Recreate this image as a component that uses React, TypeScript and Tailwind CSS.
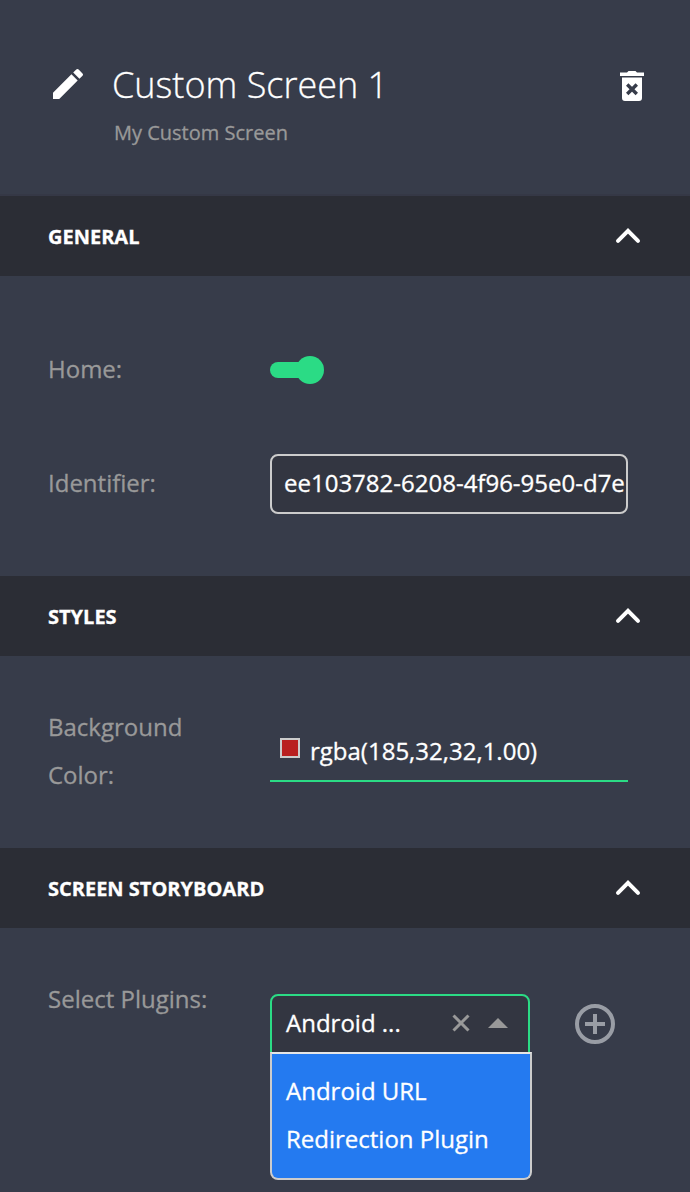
import React from 'react';

function Chevron() {
  return (
    <svg className="h-12 w-12" viewBox="0 0 24 24" fill="none" stroke="#fff" strokeWidth="2" strokeLinecap="round">
      <path d="M7 14.4 12 9.4l5 5" />
    </svg>
  );
}

function SectionHeader({ title }: { title: string }) {
  return (
    <div className="flex h-20 shrink-0 items-center justify-between bg-[#2b2d35] pl-12 pr-[38px]">
      <h2 className="pt-0.5 text-[20px] font-bold leading-[30px] text-white">{title}</h2>
      <Chevron />
    </div>
  );
}

export default function App() {
  return (
    <div
      className="flex h-[1192px] w-[690px] flex-col overflow-hidden bg-[#373c4a] text-[24px] leading-[48px] text-[#999] [-webkit-text-stroke:0.3px]"
      style={{ fontFamily: '"Open Sans", sans-serif' }}
    >
      <header className="flex h-[196px] shrink-0 items-start border-b-2 border-[#353846] pl-12 pr-[38px] pt-[60px]">
        <svg className="mt-1 h-10 w-10 shrink-0" viewBox="0 0 24 24" fill="#fff">
          <path d="M3 17.25V21h3.75L17.81 9.94l-3.75-3.75L3 17.25zM20.71 7.04a.996.996 0 0 0 0-1.41l-2.34-2.34a.996.996 0 0 0-1.41 0l-1.83 1.83 3.75 3.75 1.83-1.83z" />
        </svg>
        <div className="ml-6 flex-1">
          <h1 className="text-[36px] font-light leading-[50px] text-white">Custom Screen 1</h1>
          <p className="ml-0.5 mt-2 text-[20px] leading-[30px]">My Custom Screen</p>
        </div>
        <svg className="mt-1.5 h-10 w-10 shrink-0" viewBox="0 0 40 40">
          <path d="M8 6.500h7L16.500 5h7L25 6.500h7V10H8zM10 11.500h20V32q0 3-3 3H13q-3 0-3-3z" fill="#fff" />
          <path d="m15.200 18.500 9.600 9.500m0-9.500-9.600 9.500" stroke="#373c4a" strokeWidth="3.400" />
        </svg>
      </header>

      <SectionHeader title="GENERAL" />
      <section className="flex h-[300px] shrink-0 flex-col px-12">
        <div className="mt-[69px] flex h-12 items-center">
          <span className="w-[222px]">Home:</span>
          <div className="mt-0.5 flex h-7 w-[54px] items-center">
            <div className="h-4 w-10 rounded-l-full bg-[#2bdb85]" />
            <div className="-ml-[14px] h-7 w-7 shrink-0 rounded-full bg-[#2bdb85]" />
          </div>
        </div>
        <div className="mt-[61px] flex h-[60px] items-center">
          <span className="w-[222px] pb-0.5">Identifier:</span>
          <div className="h-[60px] w-[358px] overflow-hidden whitespace-nowrap rounded-lg border-2 border-[#ccc] bg-[#333641] pl-3 leading-[54px] text-white">
            ee103782-6208-4f96-95e0-d7e
          </div>
        </div>
      </section>

      <SectionHeader title="STYLES" />
      <section className="flex h-[192px] shrink-0 items-start px-12 pt-[47px]">
        <div className="w-[222px] pr-16">Background Color:</div>
        <div className="mt-[19px] flex h-[60px] w-[358px] border-b-2 border-[#2bdb85] pl-[10px]">
          <div className="mt-4 h-5 w-5 border-2 border-[#ccc] bg-[#b92020]" />
          <span className="ml-[10px] mt-[5px] text-white">rgba(185,32,32,1.00)</span>
        </div>
      </section>

      <SectionHeader title="SCREEN STORYBOARD" />
      <section className="flex flex-1 items-start px-12">
        <div className="mt-[47px] w-[222px]">Select Plugins:</div>
        <div className="relative mt-[66px] flex h-[60px] w-[260px] items-center rounded-t-lg border-2 border-[#2bdb85] bg-[#333641] pb-0.5 pl-[14px] text-white">
          <span className="w-[165px] leading-[54px]">Android ...</span>
          <svg className="h-5 w-5" viewBox="0 0 20 20" fill="none" stroke="#999" strokeWidth="3">
            <path d="m2.500 2.500 15 15M17.500 2.500l-15 15" />
          </svg>
          <svg className="ml-[17px] h-[10px] w-5" viewBox="0 0 20 10">
            <path d="M0 10 10 0l10 10z" fill="#999" />
          </svg>
          <div className="absolute -left-[2px] top-14 h-32 w-[262px] rounded-b-lg border-2 border-[#ccc] border-t-[#e6e6e6] bg-[#247af0] px-[14px] pt-[13px]">
            Android URL
            <br />
            Redirection Plugin
          </div>
        </div>
        <svg className="ml-[45px] mt-[76px] h-10 w-10" viewBox="0 0 40 40" fill="none" stroke="#999da5" strokeWidth="4">
          <circle cx="20" cy="20" r="18" />
          <path d="M20 10v20M10 20h20" />
        </svg>
      </section>
    </div>
  );
}
